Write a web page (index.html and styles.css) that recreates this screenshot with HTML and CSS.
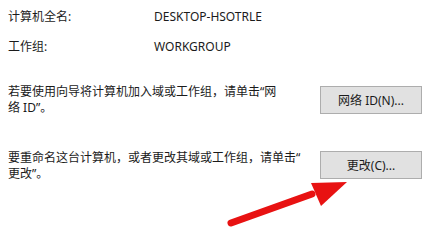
FILE: index.html
```html
<!DOCTYPE html>
<html lang="zh-CN">
<head>
    <meta charset="UTF-8">
    <title>计算机名</title>
    <link rel="stylesheet" href="styles.css">
</head>
<body>
    <div class="panel">
        <div class="info">
            <div class="info-label">计算机全名:</div>
            <div class="info-value">DESKTOP-HSOTRLE</div>
            <div class="info-label">工作组:</div>
            <div class="info-value">WORKGROUP</div>
        </div>

        <div class="action action-network">
            <p>若要使用向导将计算机加入域或工作组，请单击“网<br>络 ID”。</p>
            <button type="button">网络 ID(N)...</button>
        </div>

        <div class="action action-rename">
            <p>要重命名这台计算机，或者更改其域或工作组，请单击“<br>更改”。</p>
            <button type="button">更改(C)...</button>
        </div>

        <svg class="arrow" width="434" height="239" viewBox="0 0 434 239">
            <line x1="231" y1="223" x2="312" y2="194" stroke="#e81212" stroke-width="7" stroke-linecap="round"/>
            <polygon points="347,182 311,183 321,206" fill="#e81212"/>
        </svg>
    </div>
</body>
</html>
```

FILE: styles.css
```css
body {
    margin: 0;
    background-color: #ffffff;
    color: #1b1b1b;
    font-family: "Noto Sans", "Noto Sans CJK SC", sans-serif;
    font-size: 12px;
    line-height: 16px;
}

.panel {
    position: relative;
    width: 434px;
    height: 239px;
    padding: 9px 12px 0 8px;
    box-sizing: border-box;
    overflow: hidden;
}

.info {
    display: grid;
    grid-template-columns: 146px 1fr;
    row-gap: 14px;
}

.action {
    display: flex;
    align-items: center;
    justify-content: space-between;
}

.action p {
    margin: 0;
    white-space: nowrap;
}

.action-network {
    margin-top: 29px;
}

.action-rename {
    margin-top: 34px;
}

.action button {
    width: 102px;
    height: 28px;
    padding: 0;
    border: 1px solid #adadad;
    background-color: #e1e1e1;
    color: #1b1b1b;
    font-family: inherit;
    font-size: 12px;
}

.action-rename button {
    margin-top: -3px;
}

.arrow {
    position: absolute;
    left: 0;
    top: 0;
    pointer-events: none;
}
```
